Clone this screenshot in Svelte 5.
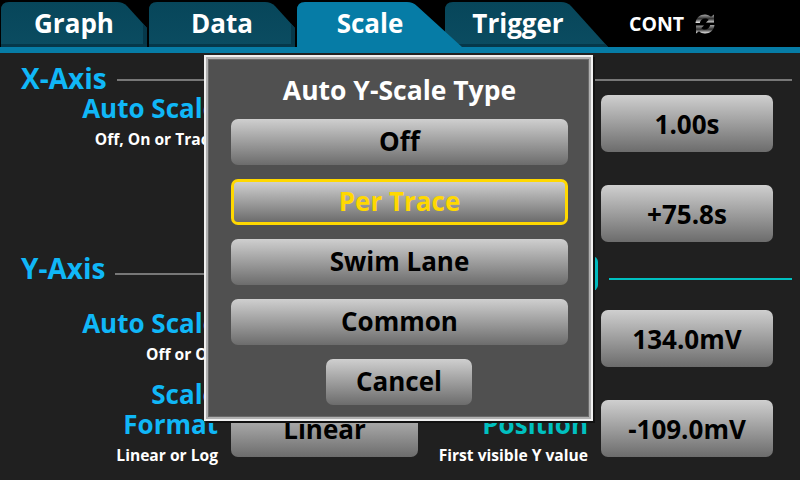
<script>
	const tabs = [
		{ label: 'Graph', kind: 'short' },
		{ label: 'Data', kind: 'short' },
		{ label: 'Scale', kind: 'active' },
		{ label: 'Trigger', kind: 'long' }
	];
	const options = ['Off', 'Per Trace', 'Swim Lane', 'Common'];
	const selected = 'Per Trace';
</script>

<div class="screen">
	<header class="topbar">
		<nav class="tabs">
			{#each tabs as tab}
				<div class="tab {tab.kind}"><span>{tab.label}</span></div>
			{/each}
		</nav>
		<div class="cont">
			<span>CONT</span>
			<svg width="20" height="20" viewBox="0 0 20 20">
				<defs>
					<linearGradient id="metal" x1="0" y1="0" x2="0" y2="1">
						<stop offset="0" stop-color="#a8a8a8" />
						<stop offset="0.5" stop-color="#303030" />
						<stop offset="1" stop-color="#f0f0f0" />
					</linearGradient>
				</defs>
				<path fill="url(#metal)" d="M0.500 9C1 3.800 5 0.500 10 0.500c2.500 0 4.500 1 6 2.300L19 0.500v8h-8l2.800-2.800C12.800 4.800 11.500 4.500 10 4.500 7.300 4.500 5.300 6.300 4.800 9z" />
				<path fill="url(#metal)" d="M19.500 11C19 16.200 15 19.500 10 19.500c-2.500 0-4.500-1-6-2.300L1 19.500v-8h8l-2.800 2.800c1 .9 2.300 1.200 3.800 1.200 2.700 0 4.700-1.800 5.200-4.500z" />
			</svg>
		</div>
	</header>
	<div class="rule"></div>

	<main class="page">
		<section class="axis x-axis">
			<div class="axis-head">
				<h2>X-Axis</h2>
				<div class="line"></div>
			</div>
			<div class="rows">
				<div class="label">
					<strong>Auto Scale</strong>
					<small>Off, On or Trace</small>
				</div>
				<button class="btn wide">Off</button>
				<div></div>
				<button class="btn">1.00s</button>
				<div></div>
				<div></div>
				<div></div>
				<button class="btn">+75.8s</button>
			</div>
		</section>

		<section class="axis y-axis">
			<div class="axis-head">
				<h2>Y-Axis</h2>
				<div class="line"></div>
				<div class="toggle"></div>
				<div class="teal-line"></div>
			</div>
			<div class="rows">
				<div class="label">
					<strong>Auto Scale</strong>
					<small>Off or On</small>
				</div>
				<button class="btn wide">Off</button>
				<div></div>
				<button class="btn">134.0mV</button>
				<div class="label two">
					<strong>Scale<br />Format</strong>
					<small>Linear or Log</small>
				</div>
				<button class="btn wide">Linear</button>
				<div class="label two teal">
					<strong>Minimum<br />Position</strong>
					<small>First visible Y value</small>
				</div>
				<button class="btn">-109.0mV</button>
			</div>
		</section>
	</main>

	<div class="dialog">
		<h3>Auto Y-Scale Type</h3>
		{#each options as option}
			<button class="btn option" class:selected={option === selected}>{option}</button>
		{/each}
		<button class="btn cancel">Cancel</button>
	</div>
</div>

<style>
	:global(body) {
		margin: 0;
		background: #202020;
	}
	.screen {
		position: relative;
		width: 800px;
		height: 480px;
		overflow: hidden;
		background: #202020;
		font-family: 'Open Sans', sans-serif;
		font-weight: 700;
		color: #fff;
	}
	.topbar {
		display: flex;
		align-items: stretch;
		height: 47px;
		padding-left: 1px;
		box-sizing: border-box;
		background: #000;
	}
	.tabs {
		display: flex;
		align-items: flex-end;
		gap: 2px;
		width: 628px;
	}
	.tab {
		flex: none;
		width: 146px;
		height: 45px;
		box-sizing: border-box;
		background: linear-gradient(#07465a, #0b4c61);
		box-shadow: inset -4px -3px 0 #06384a;
		font-size: 26px;
		line-height: 42px;
	}
	.tab span {
		display: block;
		width: 146px;
		text-align: center;
	}
	.tab.short {
		clip-path: path('M0 45V8Q0 0 8 0H116Q122 0 126 4L146 26V45Z');
	}
	.tab.active {
		position: relative;
		z-index: 1;
		width: 165px;
		margin-right: -19px;
		background: #067ca6;
		box-shadow: none;
		clip-path: path('M0 45V8Q0 0 8 0H110Q116 0 120 4L165 45Z');
	}
	.tab.long {
		width: 163px;
		box-shadow: inset 0 -3px 0 #06384a;
		clip-path: path('M0 45V8Q0 0 8 0H116Q122 0 126 4L163 45Z');
	}
	.cont {
		display: flex;
		align-items: center;
		gap: 11px;
		height: 45px;
		margin-top: 1px;
		font-size: 19.5px;
	}
	.cont svg {
		margin-top: 1px;
	}
	.rule {
		height: 6px;
		background: #067ca6;
	}
	.page {
		padding: 13px 8px 0 21px;
	}
	.axis-head {
		display: flex;
		align-items: center;
		height: 26px;
	}
	h2 {
		margin: 0 10px 2px 0;
		font-size: 28px;
		font-weight: 700;
		line-height: 26px;
		color: #10b7f7;
	}
	.y-axis h2 {
		margin-bottom: 10px;
	}
	.line {
		flex: 1;
		height: 2px;
		margin-top: 1px;
		background: #777;
	}
	.toggle {
		flex: none;
		width: 130px;
		height: 35px;
		margin-right: 11px;
		border-radius: 0 6px 6px 0;
		background: #00b9bd;
	}
	.teal-line {
		flex: none;
		width: 183px;
		height: 2px;
		margin-top: 12px;
		background: #00c0c0;
	}
	.rows {
		display: grid;
		grid-template-columns: 197px 187px 157px 172px;
		grid-auto-rows: 57px;
		column-gap: 13px;
		row-gap: 33px;
		margin-top: 3px;
	}
	.y-axis {
		margin-top: 18px;
	}
	.y-axis .rows {
		margin-top: 24px;
	}
	.label {
		align-self: center;
		text-align: right;
	}
	.label.two {
		margin-bottom: 7px;
	}
	.label strong {
		display: block;
		font-size: 26px;
		font-weight: 700;
		line-height: 30px;
		color: #10b7f7;
	}
	.label small {
		display: block;
		font-size: 15.6px;
		font-weight: 700;
		line-height: 32px;
		color: #fff;
	}
	.label.teal strong {
		color: #00c0c0;
	}
	.btn {
		display: block;
		border: none;
		padding: 0;
		border-radius: 7px;
		background: linear-gradient(#cfcfcf, #6c6c6c);
		color: #000;
		font-family: inherit;
		font-size: 26px;
		font-weight: 700;
	}
	.dialog {
		position: absolute;
		top: 55px;
		left: 204px;
		display: flex;
		flex-direction: column;
		align-items: center;
		gap: 14px;
		width: 389px;
		height: 366px;
		padding-left: 2px;
		box-sizing: border-box;
		border: 2px solid #f0f0f0;
		background: #505050;
		box-shadow: inset 0 0 0 2px #b0b0b0, inset 0 0 0 3px #6a6a6a, 2px 2px 0 #111;
	}
	h3 {
		margin: 19px 0 0;
		font-size: 26.500px;
		font-weight: 700;
		line-height: 29px;
		color: #fff;
	}
	.option {
		flex: none;
		width: 337px;
		height: 46px;
		padding-bottom: 2px;
	}
	.option.selected {
		box-sizing: border-box;
		border: 3px solid #ffd800;
		color: #ffd800;
	}
	.cancel {
		flex: none;
		width: 146px;
		height: 46px;
		margin-right: 1px;
		padding-bottom: 2px;
	}
</style>
